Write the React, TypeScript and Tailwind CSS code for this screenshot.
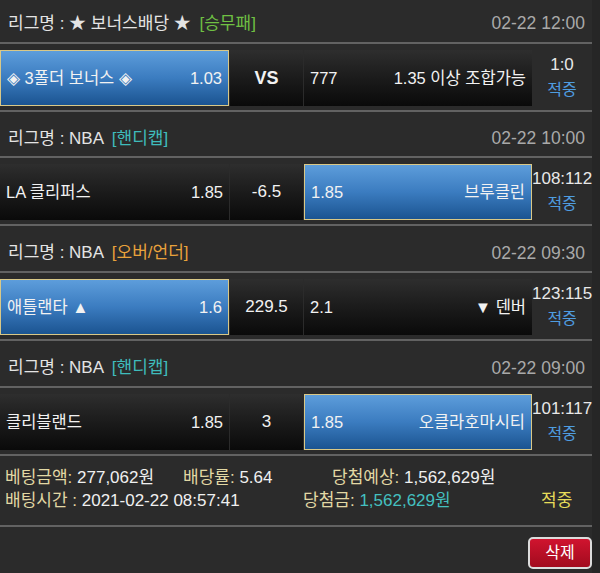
import React from 'react';

type Pick = 'home' | 'away';

interface Match {
  league: string;
  type: string;
  typeColor: string;
  time: string;
  homeName: string;
  homeOdds: string;
  mid: string;
  awayLeft: string;
  awayRight: string;
  pick: Pick;
  score: string;
  headerH: string;
}

const matches: Match[] = [
  {
    league: '★ 보너스배당 ★',
    type: '[승무패]',
    typeColor: 'text-[#6fc043]',
    time: '02-22 12:00',
    homeName: '◈ 3폴더 보너스 ◈',
    homeOdds: '1.03',
    mid: 'VS',
    awayLeft: '777',
    awayRight: '1.35 이상 조합가능',
    pick: 'home',
    score: '1:0',
    headerH: 'h-[42px] pt-[5px]',
  },
  {
    league: 'NBA',
    type: '[핸디캡]',
    typeColor: 'text-[#3fbcbc]',
    time: '02-22 10:00',
    homeName: 'LA 클리퍼스',
    homeOdds: '1.85',
    mid: '-6.5',
    awayLeft: '1.85',
    awayRight: '브루클린',
    pick: 'away',
    score: '108:112',
    headerH: 'h-[44px] pt-[9px]',
  },
  {
    league: 'NBA',
    type: '[오버/언더]',
    typeColor: 'text-[#e9a23b]',
    time: '02-22 09:30',
    homeName: '애틀랜타 ▲',
    homeOdds: '1.6',
    mid: '229.5',
    awayLeft: '2.1',
    awayRight: '▼ 덴버',
    pick: 'home',
    score: '123:115',
    headerH: 'h-[45px] pt-[9px]',
  },
  {
    league: 'NBA',
    type: '[핸디캡]',
    typeColor: 'text-[#3fbcbc]',
    time: '02-22 09:00',
    homeName: '클리블랜드',
    homeOdds: '1.85',
    mid: '3',
    awayLeft: '1.85',
    awayRight: '오클라호마시티',
    pick: 'away',
    score: '101:117',
    headerH: 'h-[45px] pt-[9px]',
  },
];

function Line() {
  return <div className="h-[2px] w-[592px] bg-[#626262]" />;
}

function BetCell({
  selected,
  left,
  right,
  width,
}: {
  selected: boolean;
  left: string;
  right: string;
  width: string;
}) {
  const box = selected
    ? 'bg-linear-to-b from-[#5d9ddb] via-[#3b7cc0] to-[#1b5491] border-[1.5px] border-[#d9c887]'
    : 'bg-linear-to-b from-[#2e2e2e] to-[#0a0a0a]';
  return (
    <div
      className={`${width} h-full flex items-center justify-between px-[6px] text-[16.5px] text-[#f2f2f2] ${box}`}
    >
      <span>{left}</span>
      <span>{right}</span>
    </div>
  );
}

function MatchBlock({ m }: { m: Match }) {
  return (
    <div>
      {/* league header */}
      <div
        className={`${m.headerH} w-[592px] flex items-center justify-between pl-[8px] pr-[7px] text-[17px]`}
      >
        <div className="text-[#e4e4e4]">
          리그명 : {m.league} <span className={`ml-[4px] ${m.typeColor}`}>{m.type}</span>
        </div>
        <div className="text-[#a9a9a9] text-[17.5px]">{m.time}</div>
      </div>
      <Line />

      {/* bet row */}
      <div className="h-[66px] flex pt-[6px] pb-[4px]">
        <div className="flex gap-[1px] h-full">
          <BetCell
            selected={m.pick === 'home'}
            left={m.homeName}
            right={m.homeOdds}
            width="w-[229px]"
          />
          <div
            className={`w-[73px] h-full flex items-center justify-center bg-linear-to-b from-[#2e2e2e] to-[#0a0a0a] text-[#f2f2f2] ${
              m.mid === 'VS' ? 'font-bold text-[18px]' : 'text-[17px]'
            }`}
          >
            {m.mid}
          </div>
          <BetCell
            selected={m.pick === 'away'}
            left={m.awayLeft}
            right={m.awayRight}
            width="w-[228px]"
          />
        </div>
        <div className="w-[66px] flex flex-col items-center justify-center leading-[25px] text-[17px] -mt-[3px]">
          <span className="text-[#e8e8e8]">{m.score}</span>
          <span className="text-[#4f9de0] text-[16px]">적중</span>
        </div>
      </div>
      <Line />
    </div>
  );
}

export default function App() {
  return (
    <div className="w-[600px] h-[573px] bg-[#262626] overflow-hidden font-['Liberation_Sans','Noto_Sans_CJK_KR',sans-serif]">
      <div className="w-[592px] h-full bg-[#2b2b2b]">
        {matches.map((m, i) => (
          <MatchBlock key={i} m={m} />
        ))}

        {/* summary */}
        <div className="h-[69px] pt-[10px] pl-[5px] text-[17px] leading-[23px]">
          <div className="flex">
            <span className="w-[178px]">
              <span className="text-[#e2d8a4]">베팅금액: </span>
              <span className="text-[#f0f0f0]">277,062원</span>
            </span>
            <span className="w-[149px]">
              <span className="text-[#e2d8a4]">배당률: </span>
              <span className="text-[#f0f0f0]">5.64</span>
            </span>
            <span>
              <span className="text-[#e2d8a4]">당첨예상: </span>
              <span className="text-[#f0f0f0]">1,562,629원</span>
            </span>
          </div>
          <div className="flex">
            <span className="w-[298px]">
              <span className="text-[#e2d8a4]">배팅시간 : </span>
              <span className="text-[#f0f0f0]">2021-02-22 08:57:41</span>
            </span>
            <span className="w-[238px]">
              <span className="text-[#e2d8a4]">당첨금: </span>
              <span className="text-[#44c0c0]">1,562,629원</span>
            </span>
            <span className="text-[#e7dd5a]">적중</span>
          </div>
        </div>
        <Line />

        {/* actions */}
        <div className="flex justify-end pt-[10px]">
          <button className="w-[64px] h-[32px] rounded-[5px] border-2 border-[#dcdcdc] bg-linear-to-b from-[#d0142f] to-[#a20b1e] text-white text-[16px]">
            삭제
          </button>
        </div>
      </div>
    </div>
  );
}
